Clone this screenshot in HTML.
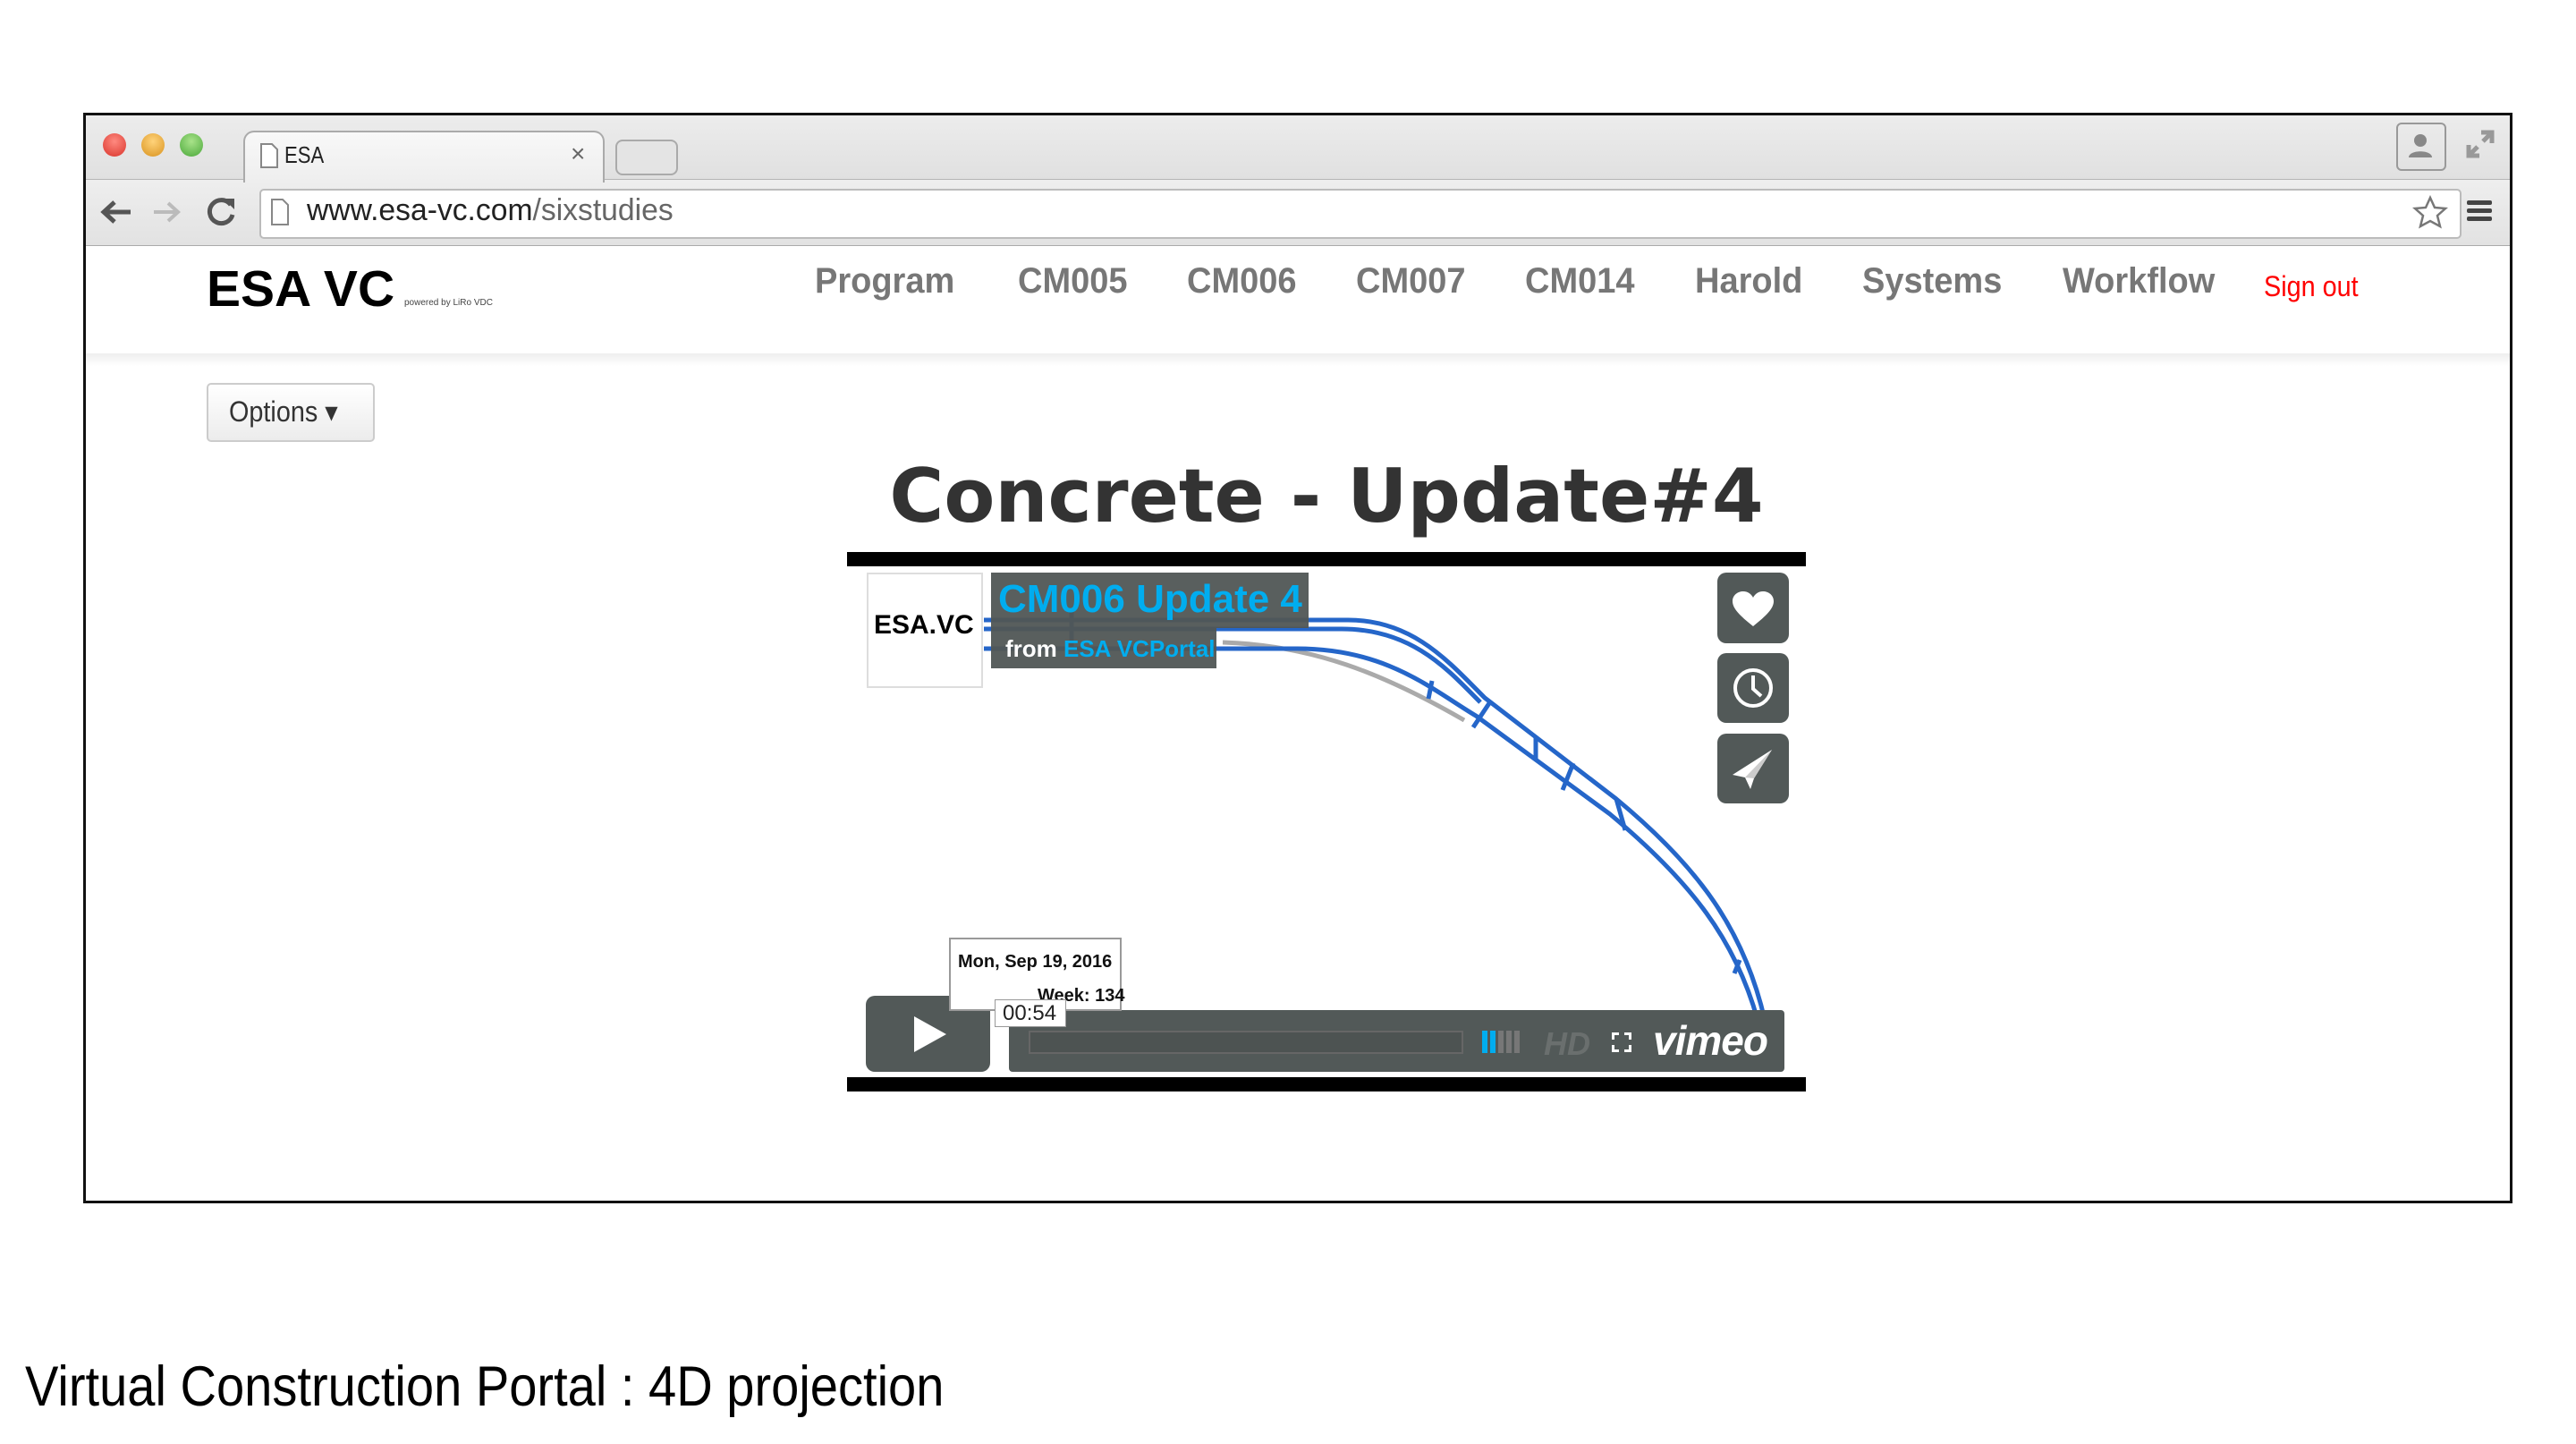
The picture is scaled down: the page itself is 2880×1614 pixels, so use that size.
<!DOCTYPE html>
<html><head><meta charset="utf-8"><style>
html,body{margin:0;padding:0;}
body{width:2880px;height:1614px;background:#fff;position:relative;overflow:hidden;font-family:"Liberation Sans",Arial,sans-serif;}
.a{position:absolute;}
.nav{position:absolute;top:292px;font-weight:bold;font-size:40px;color:#777;transform:scaleX(.95);transform-origin:left top;}
.vb{position:absolute;background:#525958;border-radius:10px;}
</style></head><body>
<!-- browser frame -->
<div class="a" style="left:93px;top:126px;width:2710px;height:1213px;border:3px solid #111;background:#fff;"></div>
<div class="a" style="left:96px;top:129px;width:2710px;height:144px;background:linear-gradient(#ececec,#d4d4d4);border-bottom:2px solid #aaa;"></div>
<div class="a" style="left:96px;top:200px;width:2710px;height:73px;background:linear-gradient(#eeeeee,#e2e2e2);border-top:1px solid #b5b5b5;"></div>
<!-- traffic lights -->
<div class="a" style="left:115px;top:149px;width:26px;height:26px;border-radius:50%;background:radial-gradient(circle at 50% 35%,#ff8a80,#d9342b);"></div>
<div class="a" style="left:158px;top:149px;width:26px;height:26px;border-radius:50%;background:radial-gradient(circle at 50% 35%,#ffd37a,#d99320);"></div>
<div class="a" style="left:201px;top:149px;width:26px;height:26px;border-radius:50%;background:radial-gradient(circle at 50% 35%,#a9e38a,#4aa83a);"></div>
<!-- tab -->
<div class="a" style="left:272px;top:146px;width:400px;height:56px;background:linear-gradient(#f8f8f8,#eeeeee);border:2px solid #aaa;border-bottom:none;border-radius:12px 12px 0 0;"></div>
<svg class="a" style="left:290px;top:160px" width="22" height="28"><path d="M2 1h12l6 6v20H2z" fill="#fff" stroke="#888" stroke-width="2"/></svg>
<div class="a" style="left:318px;top:158px;font-size:26px;color:#222;transform:scaleX(.85);transform-origin:left top;">ESA</div>
<div class="a" style="left:638px;top:156px;font-size:28px;color:#666;">×</div>
<div class="a" style="left:688px;top:156px;width:66px;height:36px;border:2px solid #aaa;border-radius:8px;background:#e4e4e4;"></div>
<!-- profile/fullscreen -->
<div class="a" style="left:2679px;top:137px;width:52px;height:50px;border:2px solid #999;border-radius:6px;"></div>
<svg class="a" style="left:2690px;top:148px" width="32" height="30"><circle cx="16" cy="9" r="7" fill="#888"/><path d="M3 28c0-9 26-9 26 0z" fill="#888"/></svg>
<svg class="a" style="left:2756px;top:144px" width="34" height="34"><path d="M18 4h12v12M30 4L20 14M4 18v12h12M4 30l10-10" stroke="#999" stroke-width="5" fill="none"/></svg>
<!-- nav buttons -->
<svg class="a" style="left:110px;top:220px" width="40" height="34"><path d="M36 17H8M18 6L6 17l12 11" stroke="#555" stroke-width="5" fill="none"/></svg>
<svg class="a" style="left:168px;top:222px" width="40" height="30"><path d="M4 15h26M20 5l11 10-11 10" stroke="#bbb" stroke-width="4" fill="none"/></svg>
<svg class="a" style="left:228px;top:218px" width="38" height="38"><path d="M30 11A13 13 0 1 0 32 22" stroke="#555" stroke-width="5" fill="none"/><path d="M22 4l12 0 0 12z" fill="#555"/></svg>
<!-- url bar -->
<div class="a" style="left:290px;top:211px;width:2458px;height:52px;background:#fff;border:2px solid #bbb;border-radius:5px;"></div>
<svg class="a" style="left:302px;top:222px" width="22" height="30"><path d="M2 1h12l6 6v22H2z" fill="#fff" stroke="#888" stroke-width="2"/></svg>
<div class="a" style="left:343px;top:216px;font-size:34px;color:#222;transform:scaleX(.99);transform-origin:left top;">www.esa-vc.com<span style="color:#666">/sixstudies</span></div>
<svg class="a" style="left:2697px;top:218px" width="40" height="40"><path d="M20 3l5 11 12 1-9 8 3 12-11-6-11 6 3-12-9-8 12-1z" fill="#fff" stroke="#777" stroke-width="2.5"/></svg>
<div class="a" style="left:2758px;top:224px;width:28px;height:5px;background:#444;border-radius:2px;box-shadow:0 9px 0 #444,0 18px 0 #444;"></div>
<!-- page navbar -->
<div class="a" style="left:96px;top:395px;width:2710px;height:14px;background:linear-gradient(#eee,#fff);"></div>
<div class="a" style="left:231px;top:290px;font-weight:bold;font-size:57px;color:#000;">ESA VC</div>
<div class="a" style="left:452px;top:333px;font-size:10px;color:#444;">powered by LiRo VDC</div>
<div class="nav" style="left:911px">Program</div>
<div class="nav" style="left:1138px">CM005</div>
<div class="nav" style="left:1327px">CM006</div>
<div class="nav" style="left:1516px">CM007</div>
<div class="nav" style="left:1705px">CM014</div>
<div class="nav" style="left:1895px">Harold</div>
<div class="nav" style="left:2082px">Systems</div>
<div class="nav" style="left:2306px">Workflow</div>
<div class="a" style="left:2531px;top:302px;font-size:32px;color:#f00;transform:scaleX(.9);transform-origin:left top;">Sign out</div>
<!-- options -->
<div class="a" style="left:231px;top:428px;width:184px;height:62px;border:2px solid #ccc;border-radius:5px;background:linear-gradient(#fff,#ececec);"></div>
<div class="a" style="left:256px;top:441px;font-size:32px;color:#333;transform:scaleX(.9);transform-origin:left top;">Options ▾</div>
<!-- title -->
<div class="a" style="left:947px;top:506px;width:1072px;text-align:center;font-family:'DejaVu Sans',sans-serif;font-weight:bold;font-size:83px;color:#333;">Concrete - Update#4</div>
<!-- video -->
<div class="a" style="left:947px;top:617px;width:1072px;height:16px;background:#000;"></div>
<div class="a" style="left:947px;top:1204px;width:1072px;height:16px;background:#000;"></div>
<svg class="a" style="left:947px;top:633px" width="1072" height="571">
<path d="M420 85 C520 88 600 120 690 172" stroke="#aaa" stroke-width="5" fill="none"/>
<g fill="none" stroke="#2566c9" stroke-width="5">
<path d="M153 60 L560 60 C633 60 673 107 713 147 L860 260 C953 337 1003 407 1026 507"/>
<path d="M153 70 L553 70 C633 70 673 117 708 152"/>
<path d="M153 92 L503 92 C603 92 653 137 703 167 L853 277 C943 352 993 417 1018 507"/>
<path d="M654 128 L650 148 M720 150 L700 180 M770 190 L770 215 M812 220 L800 250 M860 260 L870 295 M998 440 L992 455"/>
<path d="M251 48 L251 92"/>
</g>
</svg>
<div class="a" style="left:969px;top:640px;width:126px;height:125px;background:#fff;border:2px solid #ddd;"></div>
<div class="a" style="left:977px;top:682px;font-weight:bold;font-size:30px;color:#000;">ESA.VC</div>
<div class="a" style="left:1108px;top:640px;width:355px;height:62px;background:rgba(80,86,85,.95);"></div>
<div class="a" style="left:1116px;top:645px;font-weight:bold;font-size:44px;color:#00adef;">CM006 Update 4</div>
<div class="a" style="left:1108px;top:702px;width:252px;height:45px;background:rgba(80,86,85,.95);"></div>
<div class="a" style="left:1124px;top:710px;font-weight:bold;font-size:26px;color:#fff;">from <span style="color:#00adef">ESA VCPortal</span></div>
<div class="vb" style="left:1920px;top:640px;width:80px;height:79px;"></div>
<div class="vb" style="left:1920px;top:730px;width:80px;height:78px;"></div>
<div class="vb" style="left:1920px;top:820px;width:80px;height:78px;"></div>
<svg class="a" style="left:1935px;top:660px" width="50" height="42"><path d="M25 40C10 28 2 20 2 12 2 5 8 1 14 1c5 0 9 3 11 7 2-4 6-7 11-7 6 0 12 4 12 11 0 8-8 16-23 28z" fill="#fff"/></svg>
<svg class="a" style="left:1935px;top:744px" width="50" height="50"><circle cx="25" cy="25" r="20" stroke="#fff" stroke-width="4" fill="none"/><path d="M25 11v15l9 8" stroke="#fff" stroke-width="4" fill="none"/></svg>
<svg class="a" style="left:1935px;top:836px" width="50" height="48"><path d="M46 2L2 30l14 3 6 13 4-12z" fill="#fff"/><path d="M16 33L46 2 26 34" fill="#ccc"/></svg>
<div class="vb" style="left:968px;top:1113px;width:139px;height:85px;"></div>
<svg class="a" style="left:1020px;top:1134px" width="40" height="44"><path d="M2 2L38 22 2 42z" fill="#fff"/></svg>
<div class="vb" style="left:1128px;top:1129px;width:867px;height:69px;border-radius:4px;"></div>
<div class="a" style="left:1150px;top:1152px;width:482px;height:22px;border:2px solid #666;background:#4d5352;"></div>
<div class="a" style="left:1657px;top:1152px;width:6px;height:25px;background:#00adef;box-shadow:9px 0 0 #00adef,18px 0 0 #777,27px 0 0 #777,36px 0 0 #777;"></div>
<div class="a" style="left:1726px;top:1146px;font-weight:bold;font-style:italic;font-size:36px;color:#6a6f6e;">HD</div>
<svg class="a" style="left:1800px;top:1152px" width="26" height="26"><path d="M2 2h8v3H5v5H2zM24 2v8h-3V5h-5V2zM2 24v-8h3v5h5v3zM24 24h-8v-3h5v-5h3z" fill="#fff"/></svg>
<div class="a" style="left:1848px;top:1136px;font-weight:bold;font-style:italic;font-size:46px;color:#fff;letter-spacing:-1px;">vimeo</div>
<div class="a" style="left:1061px;top:1048px;width:189px;height:78px;background:#fff;border:2px solid #999;"></div>
<div class="a" style="left:1071px;top:1064px;font-weight:bold;font-size:20px;color:#111;">Mon, Sep 19, 2016</div>
<div class="a" style="left:1160px;top:1102px;font-weight:bold;font-size:20px;color:#111;">Week: 134</div>
<div class="a" style="left:1112px;top:1117px;width:78px;height:29px;background:#fff;border:1px solid #999;"></div>
<div class="a" style="left:1121px;top:1119px;font-size:24px;color:#222;">00:54</div>
<!-- caption -->
<div class="a" style="left:28px;top:1514px;font-size:63px;color:#000;transform:scaleX(.89);transform-origin:left top;white-space:nowrap;">Virtual Construction Portal : 4D projection</div>
</body></html>
